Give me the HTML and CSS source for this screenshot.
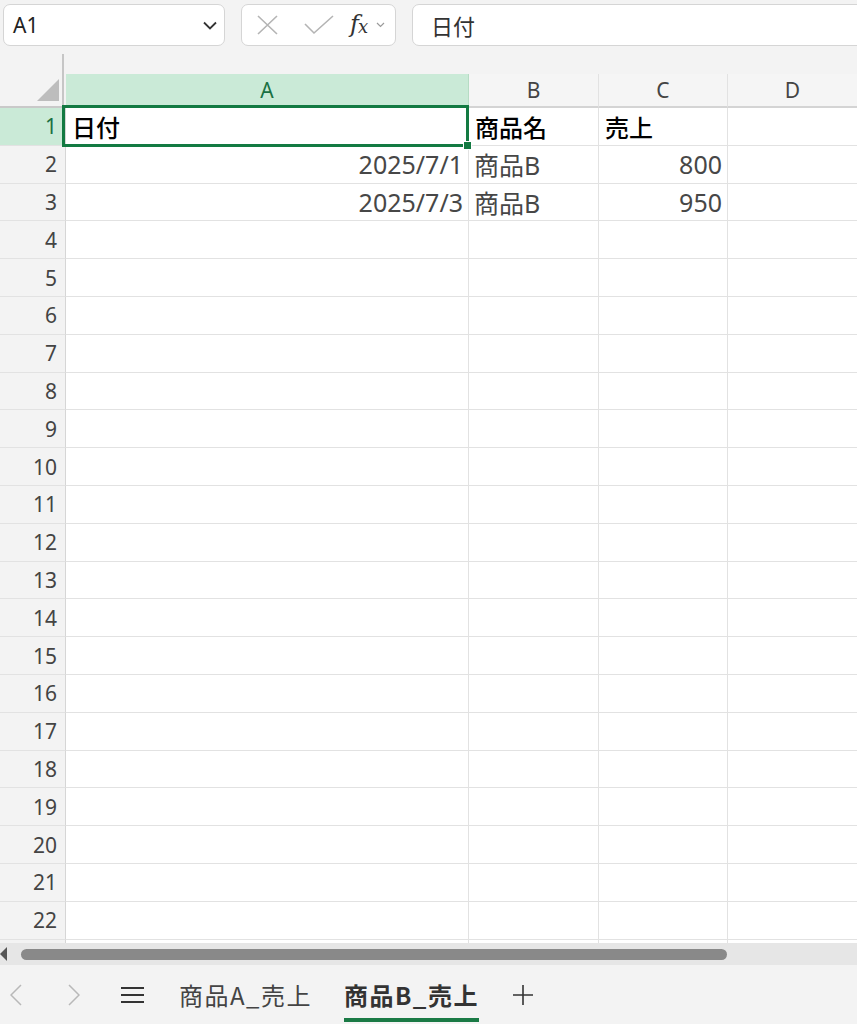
FILE: index.html
```html
<!DOCTYPE html>
<html lang="ja">
<head>
<meta charset="utf-8">
<title>Excel</title>
<link rel="stylesheet" href="styles.css">
</head>
<body>
<div class="app">
  <div class="toolbar">
    <div class="namebox">
      <span class="namebox-text">A1</span>
      <svg class="namebox-chev" width="14" height="9" viewBox="0 0 14 9"><polyline points="1,1.5 7,7.5 13,1.5" fill="none" stroke="#333" stroke-width="1.8"/></svg>
    </div>
    <div class="fxbox">
      <svg class="ico-x" width="23" height="20" viewBox="0 0 23 20"><path d="M2 1 L21 19 M21 1 L2 19" stroke="#b4b4b4" stroke-width="1.6" fill="none"/></svg>
      <svg class="ico-check" width="30" height="20" viewBox="0 0 30 20"><polyline points="1,9 10,18 29,1" stroke="#b4b4b4" stroke-width="1.6" fill="none"/></svg>
      <span class="fx">f<span class="fx-x">x</span></span>
      <svg class="ico-chev" width="9" height="6" viewBox="0 0 9 6"><polyline points="1,1 4.5,4.5 8,1" fill="none" stroke="#9a9a9a" stroke-width="1.2"/></svg>
    </div>
    <div class="formula">日付</div>
  </div>

  <div class="sheet">
    <div class="colheads">
      <div class="corner">
        <svg class="corner-tri" width="22" height="22" viewBox="0 0 22 22"><polygon points="22,0 22,22 0,22" fill="#bdbdbd"/></svg>
      </div>
      <div class="ch ch-a sel">A</div>
      <div class="ch">B</div>
      <div class="ch">C</div>
      <div class="ch ch-last">D</div>
    </div>

    <div class="rows">
      <div class="row"><div class="rh sel">1</div><div class="c head">日付</div><div class="c head">商品名</div><div class="c head">売上</div><div class="c"></div></div>
      <div class="row"><div class="rh">2</div><div class="c num">2025/7/1</div><div class="c">商品B</div><div class="c num">800</div><div class="c"></div></div>
      <div class="row"><div class="rh">3</div><div class="c num">2025/7/3</div><div class="c">商品B</div><div class="c num">950</div><div class="c"></div></div>
      <div class="row"><div class="rh">4</div><div class="c"></div><div class="c"></div><div class="c"></div><div class="c"></div></div>
      <div class="row"><div class="rh">5</div><div class="c"></div><div class="c"></div><div class="c"></div><div class="c"></div></div>
      <div class="row"><div class="rh">6</div><div class="c"></div><div class="c"></div><div class="c"></div><div class="c"></div></div>
      <div class="row"><div class="rh">7</div><div class="c"></div><div class="c"></div><div class="c"></div><div class="c"></div></div>
      <div class="row"><div class="rh">8</div><div class="c"></div><div class="c"></div><div class="c"></div><div class="c"></div></div>
      <div class="row"><div class="rh">9</div><div class="c"></div><div class="c"></div><div class="c"></div><div class="c"></div></div>
      <div class="row"><div class="rh">10</div><div class="c"></div><div class="c"></div><div class="c"></div><div class="c"></div></div>
      <div class="row"><div class="rh">11</div><div class="c"></div><div class="c"></div><div class="c"></div><div class="c"></div></div>
      <div class="row"><div class="rh">12</div><div class="c"></div><div class="c"></div><div class="c"></div><div class="c"></div></div>
      <div class="row"><div class="rh">13</div><div class="c"></div><div class="c"></div><div class="c"></div><div class="c"></div></div>
      <div class="row"><div class="rh">14</div><div class="c"></div><div class="c"></div><div class="c"></div><div class="c"></div></div>
      <div class="row"><div class="rh">15</div><div class="c"></div><div class="c"></div><div class="c"></div><div class="c"></div></div>
      <div class="row"><div class="rh">16</div><div class="c"></div><div class="c"></div><div class="c"></div><div class="c"></div></div>
      <div class="row"><div class="rh">17</div><div class="c"></div><div class="c"></div><div class="c"></div><div class="c"></div></div>
      <div class="row"><div class="rh">18</div><div class="c"></div><div class="c"></div><div class="c"></div><div class="c"></div></div>
      <div class="row"><div class="rh">19</div><div class="c"></div><div class="c"></div><div class="c"></div><div class="c"></div></div>
      <div class="row"><div class="rh">20</div><div class="c"></div><div class="c"></div><div class="c"></div><div class="c"></div></div>
      <div class="row"><div class="rh">21</div><div class="c"></div><div class="c"></div><div class="c"></div><div class="c"></div></div>
      <div class="row"><div class="rh">22</div><div class="c"></div><div class="c"></div><div class="c"></div><div class="c"></div></div>
      <div class="row"><div class="rh"></div><div class="c"></div><div class="c"></div><div class="c"></div><div class="c"></div></div>
    </div>

    <div class="selection"><div class="handle"></div></div>
  </div>

  <div class="hscroll">
    <svg class="hscroll-arrow" width="7" height="14" viewBox="0 0 7 14"><polygon points="7,0 7,14 0,7" fill="#555"/></svg>
    <div class="hscroll-thumb"></div>
  </div>

  <div class="tabbar">
    <svg class="nav nav-prev" width="12" height="22" viewBox="0 0 12 22"><polyline points="11,1 1,11 11,21" fill="none" stroke="#b8b8b8" stroke-width="1.5"/></svg>
    <svg class="nav nav-next" width="12" height="22" viewBox="0 0 12 22"><polyline points="1,1 11,11 1,21" fill="none" stroke="#b8b8b8" stroke-width="1.5"/></svg>
    <svg class="menu" width="23" height="16" viewBox="0 0 23 16"><path d="M0 1 H23 M0 8 H23 M0 15 H23" stroke="#333" stroke-width="1.8"/></svg>
    <div class="tab">商品A_売上</div>
    <div class="tab tab-active">商品B_売上</div>
    <svg class="plus" width="20" height="20" viewBox="0 0 20 20"><path d="M10 0 V20 M0 10 H20" stroke="#333" stroke-width="1.6"/></svg>
  </div>
</div>
</body>
</html>
```

FILE: styles.css
```css
* { box-sizing: border-box; }

html, body {
  margin: 0;
  padding: 0;
  background: #f3f3f3;
}

body {
  font-family: "Noto Sans", "Noto Sans CJK JP", sans-serif;
  color: #333;
  width: 857px;
  height: 1024px;
  overflow: hidden;
}

.app {
  display: flex;
  flex-direction: column;
  height: 1024px;
}

/* ---------- toolbar ---------- */
.toolbar {
  height: 54px;
  display: flex;
  align-items: flex-start;
  padding: 4px 0 0 3px;
  gap: 16px;
  flex: none;
}

.namebox, .fxbox, .formula {
  height: 42px;
  background: #fff;
  border: 1px solid #d5d5d5;
  border-radius: 7px;
  display: flex;
  align-items: center;
}

.namebox {
  width: 222px;
  padding: 0 7px 0 9px;
  justify-content: space-between;
}

.namebox-text {
  font-size: 21px;
  color: #222;
}

.fxbox {
  width: 155px;
  padding-left: 14px;
}

.ico-x { margin-right: 25px; }
.ico-check { margin-right: 16px; }

.fx {
  font-family: "DejaVu Serif", "Liberation Serif", serif;
  font-style: italic;
  font-size: 24px;
  color: #333;
  line-height: 1;
  margin-top: -2px;
  letter-spacing: -1px;
}
.fx-x {
  font-size: 18px;
  position: relative;
  top: 1px;
}

.ico-chev { margin-left: 9px; }

.formula {
  flex: 1;
  margin-right: -12px;
  padding-left: 18px;
  font-family: "Noto Sans CJK JP", sans-serif;
  font-size: 22px;
  color: #333;
}

/* ---------- sheet ---------- */
.sheet {
  position: relative;
  height: 889px;
  overflow: hidden;
  flex: none;
  background: #fff;
}

.colheads {
  display: flex;
  align-items: flex-end;
  height: 54px;
  background: #f3f3f3;
}

.corner {
  width: 66px;
  height: 54px;
  position: relative;
  border-bottom: 2px solid #c9c9c9;
}
.corner::after {
  content: "";
  position: absolute;
  right: 2px;
  top: 0;
  bottom: -2px;
  width: 2px;
  background: #c6c6c6;
}

.corner-tri {
  position: absolute;
  left: 37px;
  bottom: 5px;
}

.ch {
  height: 34px;
  display: flex;
  align-items: center;
  justify-content: center;
  font-size: 21px;
  color: #444;
  border-right: 1px solid #e2e2e2;
  border-bottom: 2px solid #d4d4d4;
  background: #f5f5f5;
}
.ch-a { width: 403px; }
.ch:nth-child(3) { width: 130px; }
.ch:nth-child(4) { width: 129px; }
.ch-last { width: 129px; border-right: none; }

.ch.sel {
  background: #caead7;
  color: #1a7143;
  border-right-color: #b6dcc4;
  border-bottom: 3px solid #1a7a45;
}

.rows {
  display: flex;
  flex-direction: column;
}

.row {
  display: grid;
  grid-template-columns: 66px 403px 130px 129px 129px;
  height: 37.8px;
  flex: none;
}

.rh {
  background: #f3f3f3;
  border-right: 1px solid #d6d6d6;
  border-bottom: 1px solid #e2e2e2;
  display: flex;
  align-items: center;
  justify-content: flex-end;
  padding-right: 8px;
  font-size: 21px;
  color: #444;
}
.rh.sel {
  background: #caead7;
  color: #1a7143;
}

.c {
  border-right: 1px solid #e2e2e2;
  border-bottom: 1px solid #e2e2e2;
  display: flex;
  align-items: center;
  padding: 0 5px;
  font-size: 25px;
  color: #474747;
  white-space: nowrap;
  overflow: hidden;
}
.c:last-child { border-right: none; }

.c.num { justify-content: flex-end; }

.c.head {
  color: #000;
  font-weight: 500;
  font-family: "Noto Sans CJK JP", sans-serif;
  font-size: 24px;
  padding-left: 6px;
}

.selection {
  position: absolute;
  left: 62px;
  top: 51px;
  width: 407px;
  height: 42px;
  border: 3px solid #137a42;
  pointer-events: none;
}

.handle {
  position: absolute;
  right: -6px;
  bottom: -6px;
  width: 9px;
  height: 9px;
  background: #137a42;
  border: 1px solid #fff;
}

/* ---------- horizontal scrollbar ---------- */
.hscroll {
  height: 22px;
  flex: none;
  background: #e6e6e6;
  display: flex;
  align-items: center;
  position: relative;
}

.hscroll-arrow {
  position: absolute;
  left: 0;
  top: 4px;
}

.hscroll-thumb {
  margin-left: 21px;
  width: 706px;
  height: 11px;
  border-radius: 6px;
  background: #898989;
}

/* ---------- tab bar ---------- */
.tabbar {
  flex: 1;
  display: flex;
  align-items: center;
  background: #f3f3f3;
  position: relative;
}

.nav-prev { margin-left: 10px; }
.nav-next { margin-left: 46px; }
.menu { margin-left: 41px; }

.tab {
  font-family: "Noto Sans CJK JP", sans-serif;
  font-size: 24px;
  letter-spacing: 1.5px;
  color: #444;
  height: 59px;
  display: flex;
  align-items: center;
  margin-left: 35px;
}

.tab-active {
  margin-left: 32px;
  font-weight: 700;
  color: #333;
  position: relative;
  letter-spacing: 1.5px;
  margin-right: -1.5px;
}
.tab-active::after {
  content: "";
  position: absolute;
  left: 0;
  right: 0;
  bottom: 2px;
  height: 4px;
  background: #1a7a45;
}

.plus { margin-left: 36px; }
```
